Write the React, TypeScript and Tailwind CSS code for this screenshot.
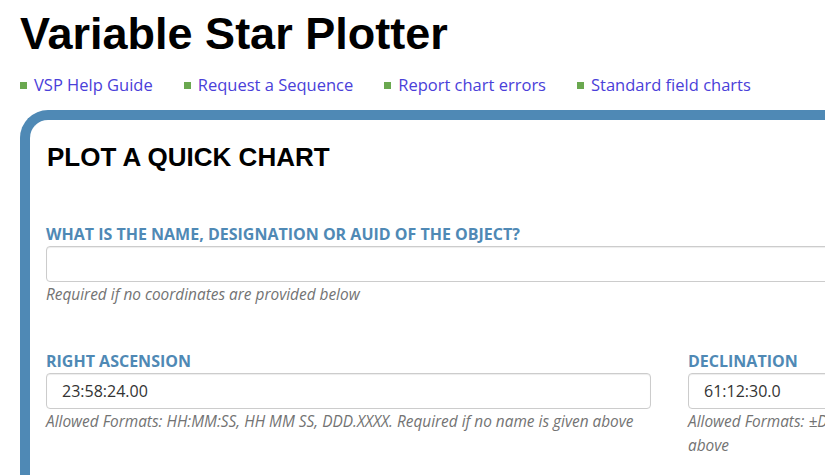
import type { ReactNode } from 'react'

const links = ['VSP Help Guide', 'Request a Sequence', 'Report chart errors', 'Standard field charts']

function Field({
  label,
  value,
  help,
  className,
}: {
  label: string
  value?: string
  help: ReactNode
  className?: string
}) {
  return (
    <div className={className}>
      <label className="block whitespace-nowrap text-[16px] font-bold uppercase leading-[22px] text-[#4f89b5]">
        {label}
      </label>
      <input
        readOnly
        value={value ?? ''}
        className="mt-[1px] block h-[36px] w-full rounded-[4px] border border-[#cccccc] bg-white px-[15px] text-[16px] text-[#333333] shadow-[inset_0_1px_1px_rgba(0,0,0,0.075)] outline-none"
      />
      <p className="mt-px text-[15.4px] italic leading-[24px] text-[#737373]">{help}</p>
    </div>
  )
}

export default function App() {
  return (
    <div className="h-[475px] w-[825px] overflow-hidden bg-white font-['Open_Sans',sans-serif]">
      <h1 className="pl-5 pt-[8px] font-['Liberation_Sans',Arial,sans-serif] text-[45px] font-bold leading-[52px] text-black">
        Variable Star Plotter
      </h1>

      <ul className="mt-[13px] flex pl-5 text-[16.5px] leading-[24px]">
        {links.map((l) => (
          <li key={l} className="mr-[31px] flex items-center">
            <span className="mr-[7px] inline-block h-[7px] w-[7px] bg-[#6aa84f]" />
            <a href="#" className="text-[#4a40d9]">
              {l}
            </a>
          </li>
        ))}
      </ul>

      <div className="ml-5 mt-[13px] w-[1320px] rounded-tl-[28px] border-l-[10px] border-t-[10px] border-[#4f89b5] pb-10 pl-[16px] pt-[22px]">
        <h2 className="pl-px font-['Liberation_Sans',Arial,sans-serif] text-[26px] font-bold uppercase leading-[30px] text-black">
          Plot a Quick Chart
        </h2>

        <Field
          className="mt-[51px] w-[1247px]"
          label="What is the name, designation or AUID of the object?"
          help="Required if no coordinates are provided below"
        />

        <div className="mt-[43px] flex gap-[37px]">
          <Field
            className="w-[605px]"
            label="Right Ascension"
            value="23:58:24.00"
            help="Allowed Formats: HH:MM:SS, HH MM SS, DDD.XXXX. Required if no name is given above"
          />
          <Field
            className="w-[605px]"
            label="Declination"
            value="61:12:30.0"
            help="Allowed Formats: ±DD:MM:SS, ±DD MM SS, ±DDD.XXXX. Required if no name is given above"
          />
        </div>
      </div>
    </div>
  )
}
